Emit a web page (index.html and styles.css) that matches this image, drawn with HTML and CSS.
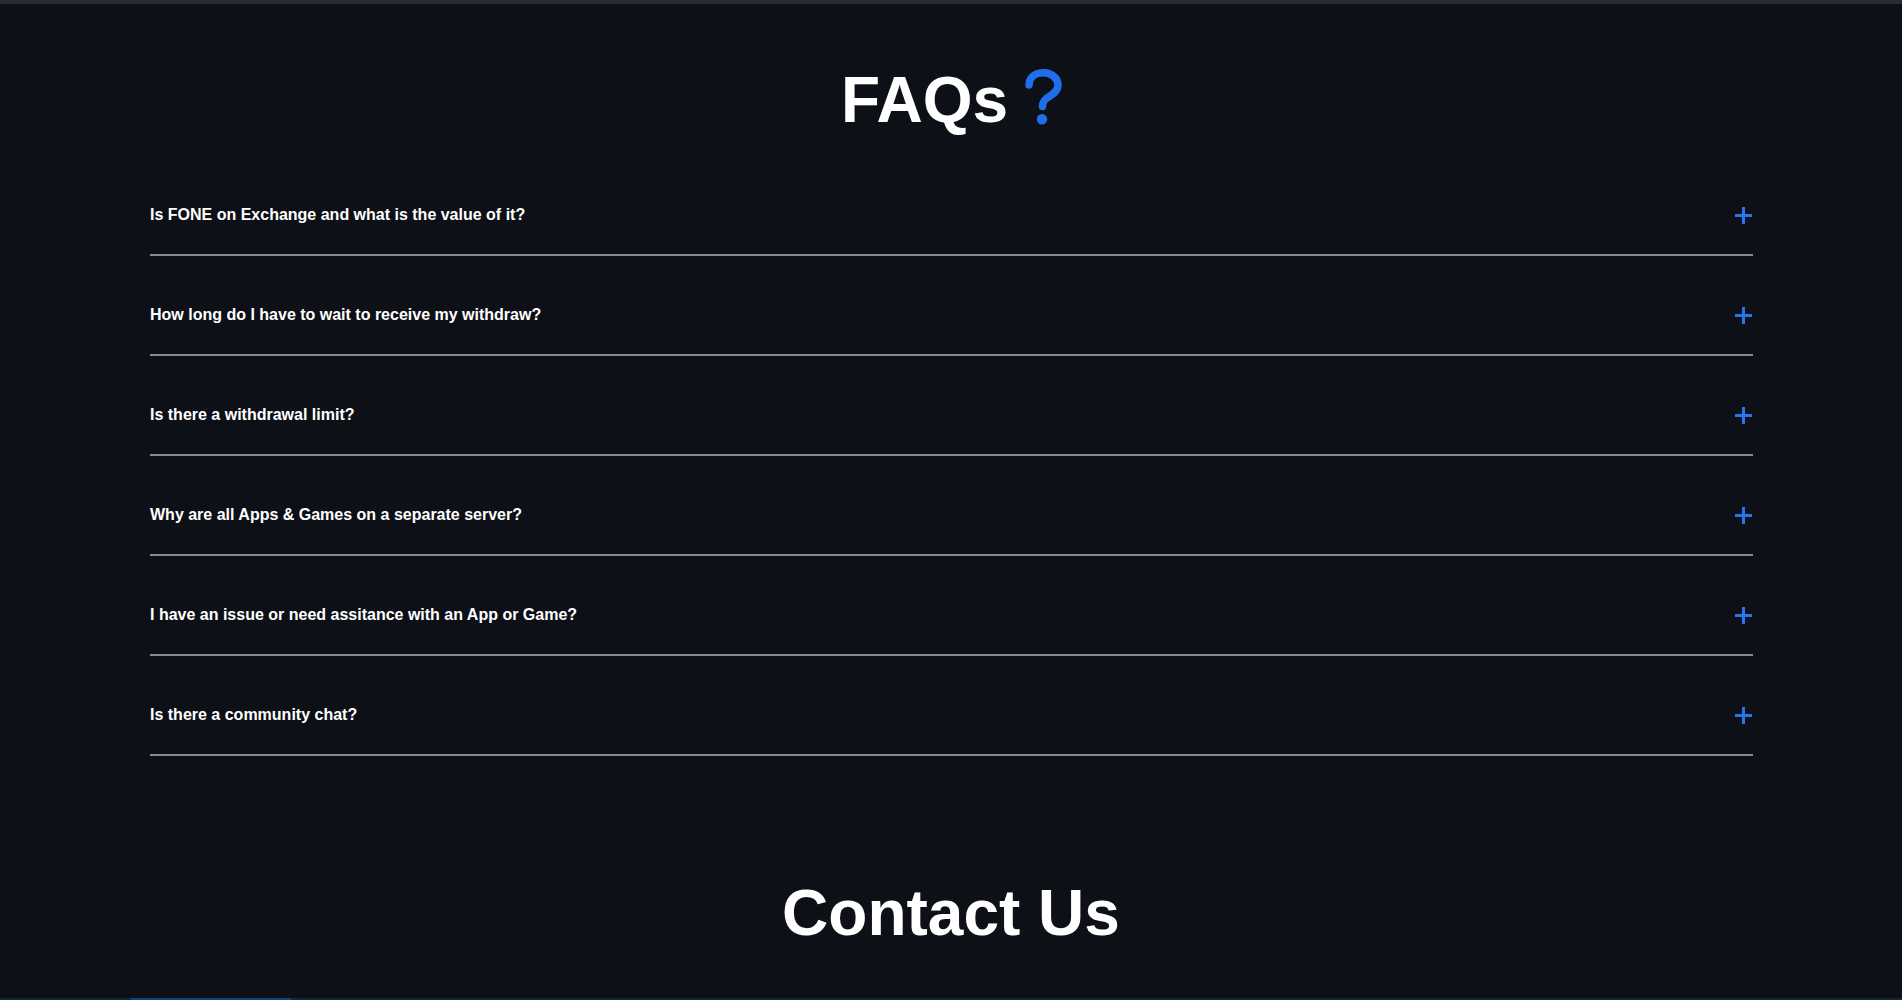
FILE: index.html
```html
<!DOCTYPE html>
<html lang="en">
<head>
<meta charset="utf-8">
<title>FAQs</title>
<link rel="stylesheet" href="styles.css">
</head>
<body>
<div class="topbar"></div>
<section class="faq">
  <h2 class="faq-title">
    <span>FAQs</span>
    <svg class="qmark" width="37" height="56" viewBox="0 0 37 56" aria-hidden="true">
      <path d="M4 16 C4 8 10.5 3.75 18.5 3.75 C26.5 3.75 33 9 33 16 C33 22 28 25 23.5 28 C19.5 30.5 17.5 32.5 17.5 37.5" fill="none" stroke="#1f6feb" stroke-width="7.5" stroke-linecap="round" stroke-linejoin="round"/>
      <circle cx="17" cy="50.3" r="5.2" fill="#1f6feb"/>
    </svg>
  </h2>
  <ul class="faq-list">
    <li class="faq-item"><span class="faq-q">Is FONE on Exchange and what is the value of it?</span><span class="plus"></span></li>
    <li class="faq-item"><span class="faq-q">How long do I have to wait to receive my withdraw?</span><span class="plus"></span></li>
    <li class="faq-item"><span class="faq-q">Is there a withdrawal limit?</span><span class="plus"></span></li>
    <li class="faq-item"><span class="faq-q">Why are all Apps &amp; Games on a separate server?</span><span class="plus"></span></li>
    <li class="faq-item"><span class="faq-q">I have an issue or need assitance with an App or Game?</span><span class="plus"></span></li>
    <li class="faq-item"><span class="faq-q">Is there a community chat?</span><span class="plus"></span></li>
  </ul>
</section>
<section class="contact">
  <h2 class="contact-title">Contact Us</h2>
  <div class="contact-strip"><div class="contact-tab"></div></div>
</section>
</body>
</html>
```

FILE: styles.css
```css
html, body {
  margin: 0;
  padding: 0;
}
html { overflow: hidden; }
body {
  background: #0d1017;
  color: #ffffff;
  font-family: "Liberation Sans", Arial, sans-serif;
}
.topbar {
  height: 4px;
  background: #2b2a33;
}
.faq {
  padding: 0 149px 0 150px;
}
.faq-title {
  margin: 59px 0 0;
  display: flex;
  justify-content: center;
  align-items: flex-start;
  gap: 17px;
  font-size: 64px;
  font-weight: 700;
  line-height: 74px;
  height: 74px;
}
.qmark {
  display: block;
  margin-top: 6px;
}
.faq-list {
  list-style: none;
  margin: 19px 0 0;
  padding: 0;
}
.faq-item {
  display: flex;
  align-items: center;
  justify-content: space-between;
  padding: 49px 0 29px 0;
  border-bottom: 2px solid #8a8a8a;
}
.faq-q {
  font-size: 16px;
  font-weight: 700;
  line-height: 20px;
}
.plus {
  position: relative;
  width: 17px;
  height: 17px;
  margin-right: 1px;
  margin-top: 0;
}
.plus::before,
.plus::after {
  content: "";
  position: absolute;
  background: #2874ea;
}
.plus::before {
  left: 0;
  right: 0;
  top: 7px;
  height: 3px;
}
.plus::after {
  top: 0;
  bottom: 0;
  left: 7px;
  width: 3px;
}
.contact {
  margin-top: 120px;
}
.contact-title {
  margin: 0;
  text-align: center;
  font-size: 64px;
  font-weight: 700;
  line-height: 74px;
}
.contact-strip {
  margin-top: 48px;
  height: 40px;
  background: #12273a;
  padding-left: 131px;
}
.contact-tab {
  width: 160px;
  height: 40px;
  background: #0c487b;
}
```
